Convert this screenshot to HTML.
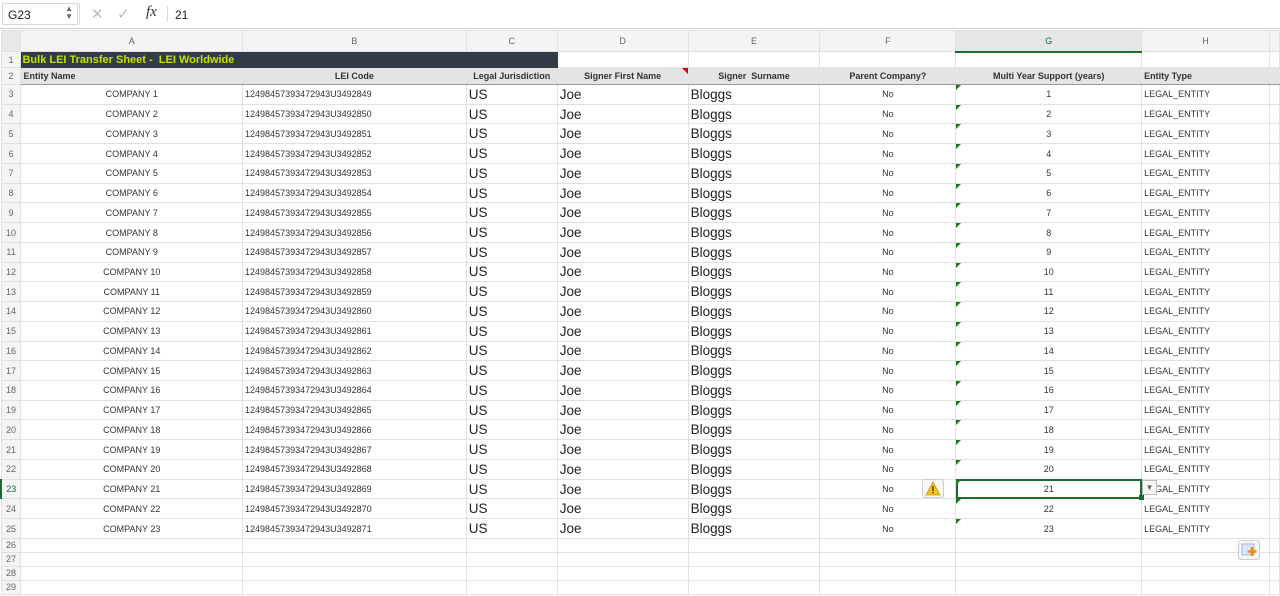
<!DOCTYPE html>
<html><head><meta charset="utf-8"><style>
*{margin:0;padding:0;box-sizing:border-box}
body{width:1280px;height:596px;overflow:hidden;background:#fff;font-family:"Liberation Sans",sans-serif;position:relative}
#fb{position:absolute;left:0;top:0;width:1280px;height:29px;background:#fff;border-bottom:1px solid #cfcfcf}
#nb{position:absolute;left:2px;top:3px;width:76px;height:22px;border:1px solid #d5d5d5;font-size:12px;padding:4px 5px;color:#222}
table{position:absolute;left:0;top:30px;border-collapse:collapse;table-layout:fixed}
td{border:1px solid #e0e0e0;font-size:9px;color:#333;white-space:nowrap;overflow:hidden;padding:0 2px;height:19.74px;line-height:12px;vertical-align:middle}
tr.h td{background:#f4f4f4;height:21px;text-align:center;color:#666;font-size:9px;padding:0}
td.rh{background:#f4f4f4;color:#666;text-align:center;padding:0;font-size:9px}
tr.t td{height:16px}
tr.t td.tt{background:#323c48;color:#c8e000;font-weight:bold;font-size:11px;border-color:#323c48}
tr.s td{height:17px;background:#e4e4e4;font-weight:bold;font-size:9px;text-align:center;border-bottom:1px solid #999;border-top:1px solid #999;padding:0 2px}
tr.s td.rh{background:#f4f4f4;font-weight:normal;border-top:1px solid #e0e0e0;border-bottom:1px solid #e0e0e0}
tr.e td{height:14px;padding:0}
.c{text-align:center}.b{font-size:13.5px;line-height:15px;color:#222}
.g{position:relative}
.g:before{content:"";position:absolute;left:0;top:0;border-top:5px solid #1a7a1a;border-right:5px solid transparent}
</style></head><body>
<div id="fb"><div id="nb">G23<span style="position:absolute;right:4px;top:1px;font-size:8px;color:#666;line-height:8px">▲<br>▼</span></div>
<div style="position:absolute;left:79px;top:3px;width:1px;height:22px;background:#ddd"></div>
<span style="position:absolute;left:91px;top:5px;font-size:15px;color:#bbb">✕</span>
<span style="position:absolute;left:117px;top:5px;font-size:15px;color:#bbb">✓</span>
<span style="position:absolute;left:146px;top:4px;font-size:15px;font-style:italic;font-family:'Liberation Serif',serif;color:#333">fx</span>
<div style="position:absolute;left:167px;top:6px;width:1px;height:16px;background:#ddd"></div>
<span style="position:absolute;left:175px;top:8px;font-size:12px;color:#222">21</span></div>
<table>
<colgroup><col style="width:20px"><col style="width:222px"><col style="width:224px"><col style="width:91px"><col style="width:131px"><col style="width:132px"><col style="width:136px"><col style="width:186px"><col style="width:128px"><col style="width:10px"></colgroup>
<tr class="h"><td style="background:#e8e8e8"></td><td>A</td><td>B</td><td>C</td><td>D</td><td>E</td><td>F</td><td style="color:#1d6b2e;background:#e6e6e6;border-bottom:2px solid #1d6b2e">G</td><td>H</td><td></td></tr>
<tr class="t"><td class="rh">1</td><td class="tt" colspan="3" style="padding-left:1px">Bulk LEI Transfer Sheet -&nbsp; LEI Worldwide</td><td></td><td></td><td></td><td></td><td></td><td></td></tr>
<tr class="s"><td class="rh">2</td><td style="text-align:left">Entity Name</td><td>LEI Code</td><td>Legal Jurisdiction</td><td style="position:relative">Signer First Name<span style="position:absolute;right:0;top:0;border-top:6px solid #d00;border-left:6px solid transparent"></span></td><td>Signer&nbsp; Surname</td><td>Parent Company?</td><td>Multi Year Support (years)</td><td style="text-align:left">Entity Type</td><td></td></tr>
<tr><td class="rh">3</td><td class="c">COMPANY 1</td><td>12498457393472943U3492849</td><td class="b">US</td><td class="b">Joe</td><td class="b">Bloggs</td><td class="c">No</td><td class="c g">1</td><td>LEGAL_ENTITY</td><td></td></tr>
<tr><td class="rh">4</td><td class="c">COMPANY 2</td><td>12498457393472943U3492850</td><td class="b">US</td><td class="b">Joe</td><td class="b">Bloggs</td><td class="c">No</td><td class="c g">2</td><td>LEGAL_ENTITY</td><td></td></tr>
<tr><td class="rh">5</td><td class="c">COMPANY 3</td><td>12498457393472943U3492851</td><td class="b">US</td><td class="b">Joe</td><td class="b">Bloggs</td><td class="c">No</td><td class="c g">3</td><td>LEGAL_ENTITY</td><td></td></tr>
<tr><td class="rh">6</td><td class="c">COMPANY 4</td><td>12498457393472943U3492852</td><td class="b">US</td><td class="b">Joe</td><td class="b">Bloggs</td><td class="c">No</td><td class="c g">4</td><td>LEGAL_ENTITY</td><td></td></tr>
<tr><td class="rh">7</td><td class="c">COMPANY 5</td><td>12498457393472943U3492853</td><td class="b">US</td><td class="b">Joe</td><td class="b">Bloggs</td><td class="c">No</td><td class="c g">5</td><td>LEGAL_ENTITY</td><td></td></tr>
<tr><td class="rh">8</td><td class="c">COMPANY 6</td><td>12498457393472943U3492854</td><td class="b">US</td><td class="b">Joe</td><td class="b">Bloggs</td><td class="c">No</td><td class="c g">6</td><td>LEGAL_ENTITY</td><td></td></tr>
<tr><td class="rh">9</td><td class="c">COMPANY 7</td><td>12498457393472943U3492855</td><td class="b">US</td><td class="b">Joe</td><td class="b">Bloggs</td><td class="c">No</td><td class="c g">7</td><td>LEGAL_ENTITY</td><td></td></tr>
<tr><td class="rh">10</td><td class="c">COMPANY 8</td><td>12498457393472943U3492856</td><td class="b">US</td><td class="b">Joe</td><td class="b">Bloggs</td><td class="c">No</td><td class="c g">8</td><td>LEGAL_ENTITY</td><td></td></tr>
<tr><td class="rh">11</td><td class="c">COMPANY 9</td><td>12498457393472943U3492857</td><td class="b">US</td><td class="b">Joe</td><td class="b">Bloggs</td><td class="c">No</td><td class="c g">9</td><td>LEGAL_ENTITY</td><td></td></tr>
<tr><td class="rh">12</td><td class="c">COMPANY 10</td><td>12498457393472943U3492858</td><td class="b">US</td><td class="b">Joe</td><td class="b">Bloggs</td><td class="c">No</td><td class="c g">10</td><td>LEGAL_ENTITY</td><td></td></tr>
<tr><td class="rh">13</td><td class="c">COMPANY 11</td><td>12498457393472943U3492859</td><td class="b">US</td><td class="b">Joe</td><td class="b">Bloggs</td><td class="c">No</td><td class="c g">11</td><td>LEGAL_ENTITY</td><td></td></tr>
<tr><td class="rh">14</td><td class="c">COMPANY 12</td><td>12498457393472943U3492860</td><td class="b">US</td><td class="b">Joe</td><td class="b">Bloggs</td><td class="c">No</td><td class="c g">12</td><td>LEGAL_ENTITY</td><td></td></tr>
<tr><td class="rh">15</td><td class="c">COMPANY 13</td><td>12498457393472943U3492861</td><td class="b">US</td><td class="b">Joe</td><td class="b">Bloggs</td><td class="c">No</td><td class="c g">13</td><td>LEGAL_ENTITY</td><td></td></tr>
<tr><td class="rh">16</td><td class="c">COMPANY 14</td><td>12498457393472943U3492862</td><td class="b">US</td><td class="b">Joe</td><td class="b">Bloggs</td><td class="c">No</td><td class="c g">14</td><td>LEGAL_ENTITY</td><td></td></tr>
<tr><td class="rh">17</td><td class="c">COMPANY 15</td><td>12498457393472943U3492863</td><td class="b">US</td><td class="b">Joe</td><td class="b">Bloggs</td><td class="c">No</td><td class="c g">15</td><td>LEGAL_ENTITY</td><td></td></tr>
<tr><td class="rh">18</td><td class="c">COMPANY 16</td><td>12498457393472943U3492864</td><td class="b">US</td><td class="b">Joe</td><td class="b">Bloggs</td><td class="c">No</td><td class="c g">16</td><td>LEGAL_ENTITY</td><td></td></tr>
<tr><td class="rh">19</td><td class="c">COMPANY 17</td><td>12498457393472943U3492865</td><td class="b">US</td><td class="b">Joe</td><td class="b">Bloggs</td><td class="c">No</td><td class="c g">17</td><td>LEGAL_ENTITY</td><td></td></tr>
<tr><td class="rh">20</td><td class="c">COMPANY 18</td><td>12498457393472943U3492866</td><td class="b">US</td><td class="b">Joe</td><td class="b">Bloggs</td><td class="c">No</td><td class="c g">18</td><td>LEGAL_ENTITY</td><td></td></tr>
<tr><td class="rh">21</td><td class="c">COMPANY 19</td><td>12498457393472943U3492867</td><td class="b">US</td><td class="b">Joe</td><td class="b">Bloggs</td><td class="c">No</td><td class="c g">19</td><td>LEGAL_ENTITY</td><td></td></tr>
<tr><td class="rh">22</td><td class="c">COMPANY 20</td><td>12498457393472943U3492868</td><td class="b">US</td><td class="b">Joe</td><td class="b">Bloggs</td><td class="c">No</td><td class="c g">20</td><td>LEGAL_ENTITY</td><td></td></tr>
<tr><td class="rh" style="color:#1d6b2e;border-left:2px solid #1d6b2e">23</td><td class="c">COMPANY 21</td><td>12498457393472943U3492869</td><td class="b">US</td><td class="b">Joe</td><td class="b">Bloggs</td><td class="c">No</td><td class="c g" style="outline:2px solid #1d6b2e;outline-offset:-2px">21</td><td>LEGAL_ENTITY</td><td></td></tr>
<tr><td class="rh">24</td><td class="c">COMPANY 22</td><td>12498457393472943U3492870</td><td class="b">US</td><td class="b">Joe</td><td class="b">Bloggs</td><td class="c">No</td><td class="c g">22</td><td>LEGAL_ENTITY</td><td></td></tr>
<tr><td class="rh">25</td><td class="c">COMPANY 23</td><td>12498457393472943U3492871</td><td class="b">US</td><td class="b">Joe</td><td class="b">Bloggs</td><td class="c">No</td><td class="c g">23</td><td>LEGAL_ENTITY</td><td></td></tr>
<tr class="e"><td class="rh">26</td><td></td><td></td><td></td><td></td><td></td><td></td><td></td><td></td><td></td></tr>
<tr class="e"><td class="rh">27</td><td></td><td></td><td></td><td></td><td></td><td></td><td></td><td></td><td></td></tr>
<tr class="e"><td class="rh">28</td><td></td><td></td><td></td><td></td><td></td><td></td><td></td><td></td><td></td></tr>
<tr class="e"><td class="rh">29</td><td></td><td></td><td></td><td></td><td></td><td></td><td></td><td></td><td></td></tr>
</table>
<div style="position:absolute;left:922px;top:479px;width:22px;height:19px;border:1px solid #ccc;border-radius:3px;background:#f8f8f8">
<svg width="20" height="17" viewBox="0 0 20 17"><path d="M10 2 L17 15 L3 15 Z" fill="#f5c518" stroke="#c99a00" stroke-width="0.8"/><rect x="9.3" y="6" width="1.4" height="5" fill="#333"/><rect x="9.3" y="12" width="1.4" height="1.4" fill="#333"/></svg></div>
<div style="position:absolute;left:1139px;top:495px;width:5px;height:5px;background:#1d6b2e"></div>
<div style="position:absolute;left:1142px;top:480px;width:15px;height:15px;border:1px solid #bbb;background:#f4f4f4;font-size:8px;color:#666;text-align:center;line-height:13px">▼</div>
<div style="position:absolute;left:1238px;top:540px;width:22px;height:20px;border:1px solid #ccc;border-radius:3px;background:#f6f6f6">
<svg width="20" height="18" viewBox="0 0 20 18"><rect x="3" y="3" width="12" height="11" fill="#d8e6f8" stroke="#8fb0dd" stroke-width="0.8"/><path d="M13 6v9M8.5 10.5h9" stroke="#f08a00" stroke-width="2.6"/></svg></div>
</body></html>
